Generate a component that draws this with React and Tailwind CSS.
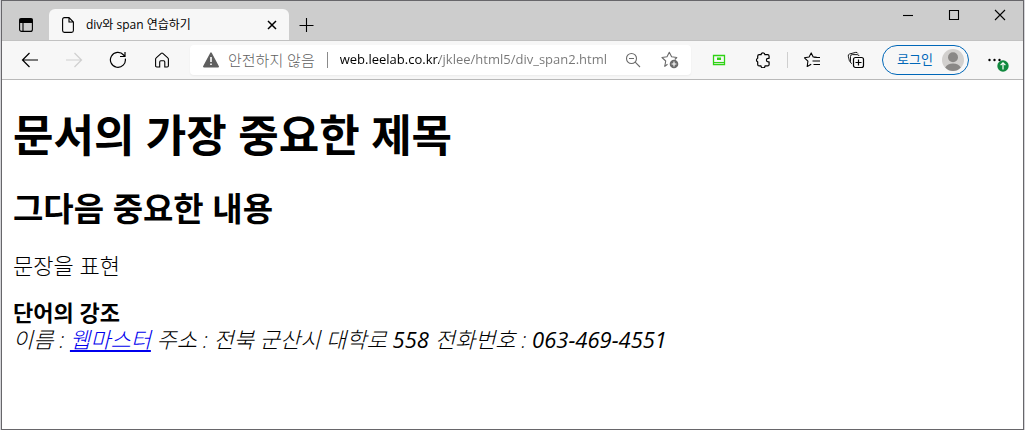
function Icon({ children, size = 'size-4', ...props }) {
    return (
        <svg viewBox="0 0 16 16" className={size} fill="none" stroke="currentColor" strokeWidth="1.1" aria-hidden="true" {...props}>
            {children}
        </svg>
    );
}

function ToolButton({ label, className = '', children }) {
    return (
        <button type="button" aria-label={label} className={`flex h-8 w-11 shrink-0 items-center justify-center ${className}`}>
            {children}
        </button>
    );
}

function TabStrip() {
    return (
        <div className="flex h-[39px] bg-[#cdcdcd]">
            <button type="button" aria-label="탭 작업 메뉴" className="flex w-[47px] items-center justify-center pt-2">
                <Icon>
                    <rect x="1.6" y="1.6" width="12.8" height="12.8" rx="2" />
                    <path d="M2 2h12v3.5H2z" fill="currentColor" />
                    <path d="M5 5v9" />
                </Icon>
            </button>
            <div className="mt-2 flex w-60 items-center rounded-t-md bg-[#f7f7f7] pr-[9px] pl-[11px]">
                <Icon>
                    <path d="M2.6 2.4Q2.6.6 4.4.6H9l4.4 4.4v8.6q0 1.8-1.8 1.8H4.4q-1.8 0-1.8-1.8zM9 .6V5h4.4" />
                </Icon>
                <span className="ml-2.5 flex-1 truncate text-xs">div와 span 연습하기</span>
                <button type="button" aria-label="탭 닫기" className="flex size-4 items-center justify-center">
                    <Icon strokeWidth="1.5">
                        <path d="M4 4l8 8M12 4l-8 8" />
                    </Icon>
                </button>
            </div>
            <button type="button" aria-label="새 탭" className="flex w-9 items-center justify-center pt-2">
                <Icon>
                    <path d="M7.5 1v14M.5 8.5h14" />
                </Icon>
            </button>
            <div className="ml-auto flex h-7">
                <button type="button" aria-label="최소화" className="flex w-[46px] items-center justify-center">
                    <Icon><path d="M3 8.5h10" /></Icon>
                </button>
                <button type="button" aria-label="최대화" className="flex w-[46px] items-center justify-center">
                    <Icon><path d="M3.5 3.5h9v9h-9z" /></Icon>
                </button>
                <button type="button" aria-label="닫기" className="flex w-[46px] items-center justify-center">
                    <Icon><path d="M3 3l10 10M13 3L3 13" /></Icon>
                </button>
            </div>
        </div>
    );
}

function AddressBar() {
    return (
        <div className="ml-1.5 flex h-[30px] min-w-0 flex-1 items-center rounded bg-white px-3 shadow-xs">
            <svg viewBox="0 0 18 16" className="h-4 w-[18px] shrink-0" aria-hidden="true">
                <path d="M9 1.2L16.2 14.6H1.8z" fill="#5f5f5f" stroke="#5f5f5f" strokeWidth="1.6" strokeLinejoin="round" />
                <path d="M9 5v5M9 11.4v1.7" stroke="#fff" strokeWidth="1.6" />
            </svg>
            <span className="ml-2 shrink-0 text-[15px] font-light text-[#5f5f5f]">안전하지 않음</span>
            <span className="mx-3 h-4 w-px shrink-0 bg-[#8a8a8a]" />
            <input
                type="text"
                aria-label="주소"
                defaultValue="web.leelab.co.kr/jklee/html5/div_span2.html"
                className="min-w-0 flex-1 bg-[linear-gradient(to_right,#000_99px,#767676_99px)] bg-clip-text text-[13px] text-transparent caret-black outline-none"
            />
            <button type="button" aria-label="축소" className="ml-3 shrink-0 text-[#6b6b6b]">
                <Icon>
                    <circle cx="6.5" cy="6.5" r="5" />
                    <path d="M10.2 10.2l4.8 4.8M4 6.5h5" />
                </Icon>
            </button>
            <button type="button" aria-label="즐겨찾기에 추가" className="ml-5 shrink-0 text-[#6b6b6b]">
                <svg viewBox="0 0 18 18" className="size-[18px]" fill="none" stroke="currentColor" strokeWidth="1.1" aria-hidden="true">
                    <path d="M6.5 13.2L3.8 15.4l.9-5.4L1 6.5l5-.8L8.3 1.2l2.3 4.5 5.2.8-2 2" strokeLinejoin="round" />
                    <circle cx="13" cy="13" r="4.3" fill="currentColor" stroke="none" />
                    <path d="M13 10.6v4.8M10.6 13h4.8" stroke="#fff" />
                </svg>
            </button>
        </div>
    );
}

function Toolbar() {
    return (
        <div className="flex h-10 items-center border-t border-b border-t-[#c2c2c2] border-b-[#b9b9b9] bg-[#f7f7f7] px-1.5">
            <ToolButton label="뒤로">
                <svg viewBox="0 0 18 18" className="size-[18px]" fill="none" stroke="currentColor" strokeWidth="1.2" aria-hidden="true">
                    <path d="M17 9H1.5M8.5 2L1.5 9l7 7" />
                </svg>
            </ToolButton>
            <ToolButton label="앞으로" className="text-[#cfcfcf]">
                <svg viewBox="0 0 18 18" className="size-[18px]" fill="none" stroke="currentColor" strokeWidth="1.2" aria-hidden="true">
                    <path d="M1 9h15.5M9.5 2l7 7-7 7" />
                </svg>
            </ToolButton>
            <ToolButton label="새로 고침">
                <svg viewBox="0 0 18 18" className="size-[18px]" fill="none" stroke="currentColor" strokeWidth="1.2" aria-hidden="true">
                    <path d="M16.3 7.6A7.5 7.5 0 1 1 14.6 4L16 5.5M16 1v4.5h-5" />
                </svg>
            </ToolButton>
            <ToolButton label="홈">
                <Icon>
                    <path d="M1.6 7.2q0-.8.6-1.3L7.2 1.4q.8-.7 1.6 0l5 4.5q.6.5.6 1.3v6.6q0 1.2-1.2 1.2h-2.4V10q0-1.2-1.2-1.2H6.9Q5.7 8.8 5.7 10v5H2.8q-1.2 0-1.2-1.2z" />
                </Icon>
            </ToolButton>
            <AddressBar />
            <ToolButton label="화면 캡처" className="ml-1.5 text-[#2fd314]">
                <Icon>
                    <path d="M2.5 3.5h11v9h-11z" strokeWidth="1.3" />
                    <path d="M2.5 10.5h11" />
                    <path d="M6 5.5h4v2.5H6z" fill="currentColor" stroke="none" />
                </Icon>
            </ToolButton>
            <ToolButton label="확장">
                <Icon strokeWidth="1.2">
                    <path d="M4.2 2.7h1.9a1.9 1.9 0 0 1 3.8 0h2.700q1.500 0 1.500 1.500v2.100h-.9a1.800 1.800 0 0 0 0 3.600h.9v2.500q0 1.500-1.500 1.500H10a2 2 0 0 1-4 0H4.200q-1.500 0-1.500-1.500v-2.500a2 2 0 0 1 0-3.700v-2q0-1.500 1.500-1.500z" strokeLinejoin="round" />
                </Icon>
            </ToolButton>
            <span className="mx-0.5 h-4 w-px bg-[#cfcfcf]" />
            <ToolButton label="즐겨찾기">
                <svg viewBox="0 0 18 16" className="h-4 w-[18px]" fill="none" stroke="currentColor" strokeWidth="1.1" aria-hidden="true">
                    <path d="M13.8 5.3l-3.6-.4L8.2.9 6.1 5l-4.6.8 3.4 3.4-.7 5.3 4-2.2M11 5.5h6M9.5 9H17M10.5 12.5H17" strokeLinejoin="round" />
                </svg>
            </ToolButton>
            <ToolButton label="컬렉션">
                <svg viewBox="0 0 18 18" className="size-[18px]" fill="none" stroke="currentColor" strokeWidth="1.1" aria-hidden="true">
                    <path d="M3.6 11.2Q2.700 10.800 2.400 9.800L1.300 5.200Q.9 3.500 2.500 3l6.200-1.600q1.500-.4 2.200 1.100M4.800 12.800Q3.500 12.200 3.500 10.500V5.400q0-1.800 1.800-1.800h4.900q1.500 0 1.900 1.400" strokeWidth=".9" />
                    <rect x="6.500" y="6.500" width="10" height="10" rx="2" fill="#f7f7f7" strokeWidth="1.200" />
                    <path d="M11.500 8.500v6M8.500 11.500h6" strokeWidth="1.200" />
                </svg>
            </ToolButton>
            <button type="button" className="ml-1 flex h-[30px] shrink-0 items-center gap-[9px] rounded-full border border-[#0067b8] pr-1 pl-3.5 text-[13px] text-[#0067b8]">
                로그인
                <svg viewBox="0 0 22 22" className="size-[22px]" aria-hidden="true">
                    <circle cx="11" cy="11" r="11" fill="#d2d0ce" />
                    <circle cx="11" cy="8.2" r="5" fill="#8a8886" />
                    <path d="M3.2 18.5q2.3-4 7.8-4t7.8 4Q15.5 22 11 22t-7.8-3.500z" fill="#8a8886" />
                </svg>
            </button>
            <ToolButton label="설정 및 기타" className="relative ml-1">
                <Icon fill="currentColor" stroke="none">
                    <circle cx="2.5" cy="8" r="1.2" />
                    <circle cx="7.5" cy="8" r="1.2" />
                    <circle cx="12.5" cy="8" r="1.2" />
                </Icon>
                <svg viewBox="0 0 12 12" className="absolute right-2 bottom-1 size-3" fill="none" aria-hidden="true">
                    <circle cx="6" cy="6" r="5.7" fill="#10893e" />
                    <path d="M6 9.5V3M3.6 5.2L6 2.8l2.4 2.4" stroke="#fff" strokeWidth="1.2" />
                </svg>
            </ToolButton>
        </div>
    );
}

function Page() {
    return (
        <main className="flex-1 bg-white px-[11px] pt-[27px] text-[22px] leading-[27px] font-light">
            <h1 className="text-[44px] leading-[56px] font-bold">문서의 가장 중요한 제목</h1>
            <h2 className="mt-[26px] text-[33px] leading-10 font-bold">그다음 중요한 내용</h2>
            <p className="mt-[23px]">문장을 표현</p>
            <div className="mt-5">
                <strong className="font-bold">단어의 강조</strong>
            </div>
            <address className="italic">
                이름 : <a href="#webmaster" className="text-[#0000ee] underline">웹마스터</a> 주소 : 전북 군산시 대학로{' '}
                <span className="font-normal">558</span> 전화번호 : <span className="font-normal">063-469-4551</span>
            </address>
        </main>
    );
}

export default function App() {
    return (
        <div className="min-h-screen bg-[#d4d4d8] px-px font-['Open_Sans','Noto_Sans_CJK_KR',sans-serif] text-black">
            <div className="flex min-h-screen flex-col border border-[#67666a]">
                <TabStrip />
                <Toolbar />
                <Page />
            </div>
        </div>
    );
}
